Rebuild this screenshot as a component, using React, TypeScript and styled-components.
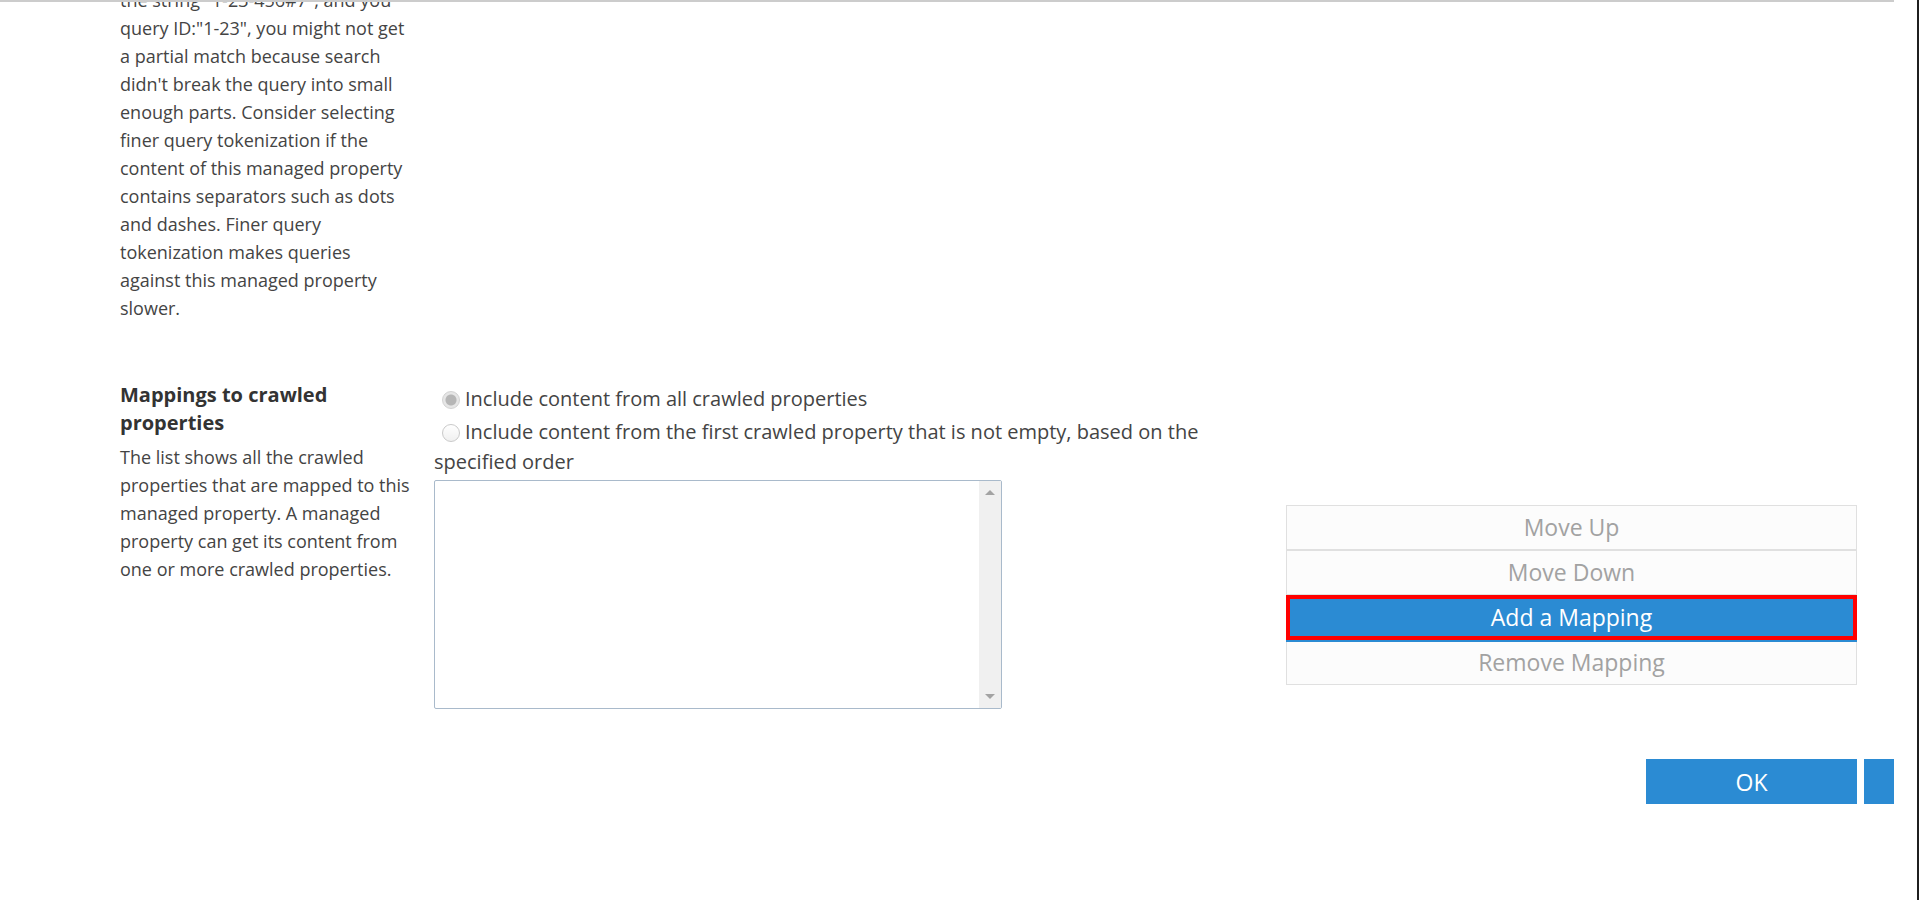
import React from "react";
import styled, { createGlobalStyle } from "styled-components";

const GlobalStyle = createGlobalStyle`
  html, body {
    margin: 0;
    padding: 0;
    height: 100%;
    overflow: hidden;
    background: #fff;
  }
  body {
    font-family: "Open Sans", "Liberation Sans", sans-serif;
    color: #444;
  }
  #root {
    height: 100%;
  }
`;

const Window = styled.div`
  display: flex;
  height: 100vh;
`;

const Viewport = styled.div`
  width: 1894px;
  flex-shrink: 0;
  border-top: 2px solid #cccccc;
  overflow: hidden;
`;

const Gutter = styled.div`
  flex: 1;
  border-right: 2px solid #1f1f1f;
`;

const Form = styled.div`
  width: 1737px;
  margin-top: -16px;
  padding-left: 120px;
`;

const Section = styled.section<{ $gap?: number }>`
  display: grid;
  grid-template-columns: 300px 1fr;
  column-gap: 14px;
  margin-top: ${(p) => p.$gap ?? 0}px;
`;

const SideColumn = styled.div``;

const Heading = styled.h3`
  margin: 0 0 6px;
  font-size: 20px;
  font-weight: 700;
  line-height: 28px;
  color: #333;
`;

const Description = styled.p`
  margin: 0;
  font-size: 18px;
  line-height: 28px;
  color: #444;
`;

const Line = styled.span`
  display: block;
  white-space: nowrap;
`;

const ControlColumn = styled.div`
  padding-top: 3px;
`;

const Choice = styled.label`
  display: block;
  width: 800px;
  margin-bottom: 3px;
  font-size: 20px;
  line-height: 30px;
  color: #444;
`;

const Radio = styled.input.attrs({ type: "radio" })`
  appearance: none;
  display: inline-block;
  width: 18px;
  height: 18px;
  margin: 0 5px 0 8px;
  vertical-align: -3px;
  border-radius: 50%;
  border: 1px solid #cacaca;
  box-sizing: border-box;
  background: linear-gradient(#ffffff, #f0f0f0);

  &:checked {
    background: radial-gradient(circle, #b6b6b6 0 5px, #e6e6e6 6px);
    border-color: #d2d2d2;
  }
`;

const ListRow = styled.div`
  display: flex;
  align-items: center;
  gap: 284px;
`;

const ListBox = styled.div`
  box-sizing: border-box;
  width: 568px;
  height: 229px;
  border: 1px solid #a9bacb;
  border-radius: 2px;
  background: #fff;
  display: flex;
  justify-content: flex-end;
`;

const ScrollTrack = styled.div`
  width: 22px;
  background: #f0f0f0;
  display: flex;
  flex-direction: column;
  justify-content: space-between;
  align-items: center;
  padding: 9px 0;
`;

const Arrow = styled.span<{ $down?: boolean }>`
  width: 0;
  height: 0;
  border-left: 5px solid transparent;
  border-right: 5px solid transparent;
  ${(p) =>
    p.$down
      ? "border-top: 5px solid #a3a3a3;"
      : "border-bottom: 5px solid #a3a3a3;"}
`;

const ActionPanel = styled.div`
  display: flex;
  flex-direction: column;
  width: 571px;
`;

const ActionButton = styled.button<{ $selected?: boolean }>`
  box-sizing: border-box;
  height: 45px;
  padding: 0;
  display: flex;
  align-items: center;
  justify-content: center;
  font-family: inherit;
  font-size: 23px;
  border: 1px solid #e0e0e0;
  background: #fcfcfc;
  color: #a2a2a2;
  cursor: default;

  ${(p) =>
    p.$selected &&
    `
    position: relative;
    z-index: 1;
    border: 4px solid #ff0000;
    background: #2b8bd3;
    color: #ffffff;
    box-shadow: 0 2px 0 #2b8bd3;
  `}
`;

const Footer = styled.div`
  display: flex;
  justify-content: flex-end;
  gap: 7px;
  margin-top: 50px;
`;

const DialogButton = styled.button<{ $trailing?: boolean }>`
  width: 211px;
  height: 45px;
  flex-shrink: 0;
  border: none;
  padding: 0;
  background: #2b8bd3;
  color: #fff;
  font-family: inherit;
  font-size: 23px;
  margin-right: ${(p) => (p.$trailing ? "-218px" : "0")};
`;

const tokenizationLines = [
  'the string "1-23-456#7", and you',
  'query ID:"1-23", you might not get',
  "a partial match because search",
  "didn't break the query into small",
  "enough parts. Consider selecting",
  "finer query tokenization if the",
  "content of this managed property",
  "contains separators such as dots",
  "and dashes. Finer query",
  "tokenization makes queries",
  "against this managed property",
  "slower.",
];

const mappingLines = [
  "The list shows all the crawled",
  "properties that are mapped to this",
  "managed property. A managed",
  "property can get its content from",
  "one or more crawled properties.",
];

export default function App() {
  return (
    <>
      <GlobalStyle />
      <Window>
        <Viewport>
          <Form>
            <Section>
              <SideColumn>
                <Description>
                  {tokenizationLines.map((l) => (
                    <Line key={l}>{l}</Line>
                  ))}
                </Description>
              </SideColumn>
              <div />
            </Section>

            <Section $gap={59}>
              <SideColumn>
                <Heading>
                  <Line>Mappings to crawled</Line>
                  <Line>properties</Line>
                </Heading>
                <Description>
                  {mappingLines.map((l) => (
                    <Line key={l}>{l}</Line>
                  ))}
                </Description>
              </SideColumn>
              <ControlColumn>
                <Choice>
                  <Radio name="mapping" defaultChecked disabled />
                  Include content from all crawled properties
                </Choice>
                <Choice>
                  <Radio name="mapping" disabled />
                  Include content from the first crawled property that is not
                  empty, based on the specified order
                </Choice>
                <ListRow>
                  <ListBox>
                    <ScrollTrack>
                      <Arrow />
                      <Arrow $down />
                    </ScrollTrack>
                  </ListBox>
                  <ActionPanel>
                    <ActionButton>Move Up</ActionButton>
                    <ActionButton>Move Down</ActionButton>
                    <ActionButton $selected>Add a Mapping</ActionButton>
                    <ActionButton>Remove Mapping</ActionButton>
                  </ActionPanel>
                </ListRow>
              </ControlColumn>
            </Section>

            <Footer>
              <DialogButton>OK</DialogButton>
              <DialogButton $trailing>Cancel</DialogButton>
            </Footer>
          </Form>
        </Viewport>
        <Gutter />
      </Window>
    </>
  );
}
